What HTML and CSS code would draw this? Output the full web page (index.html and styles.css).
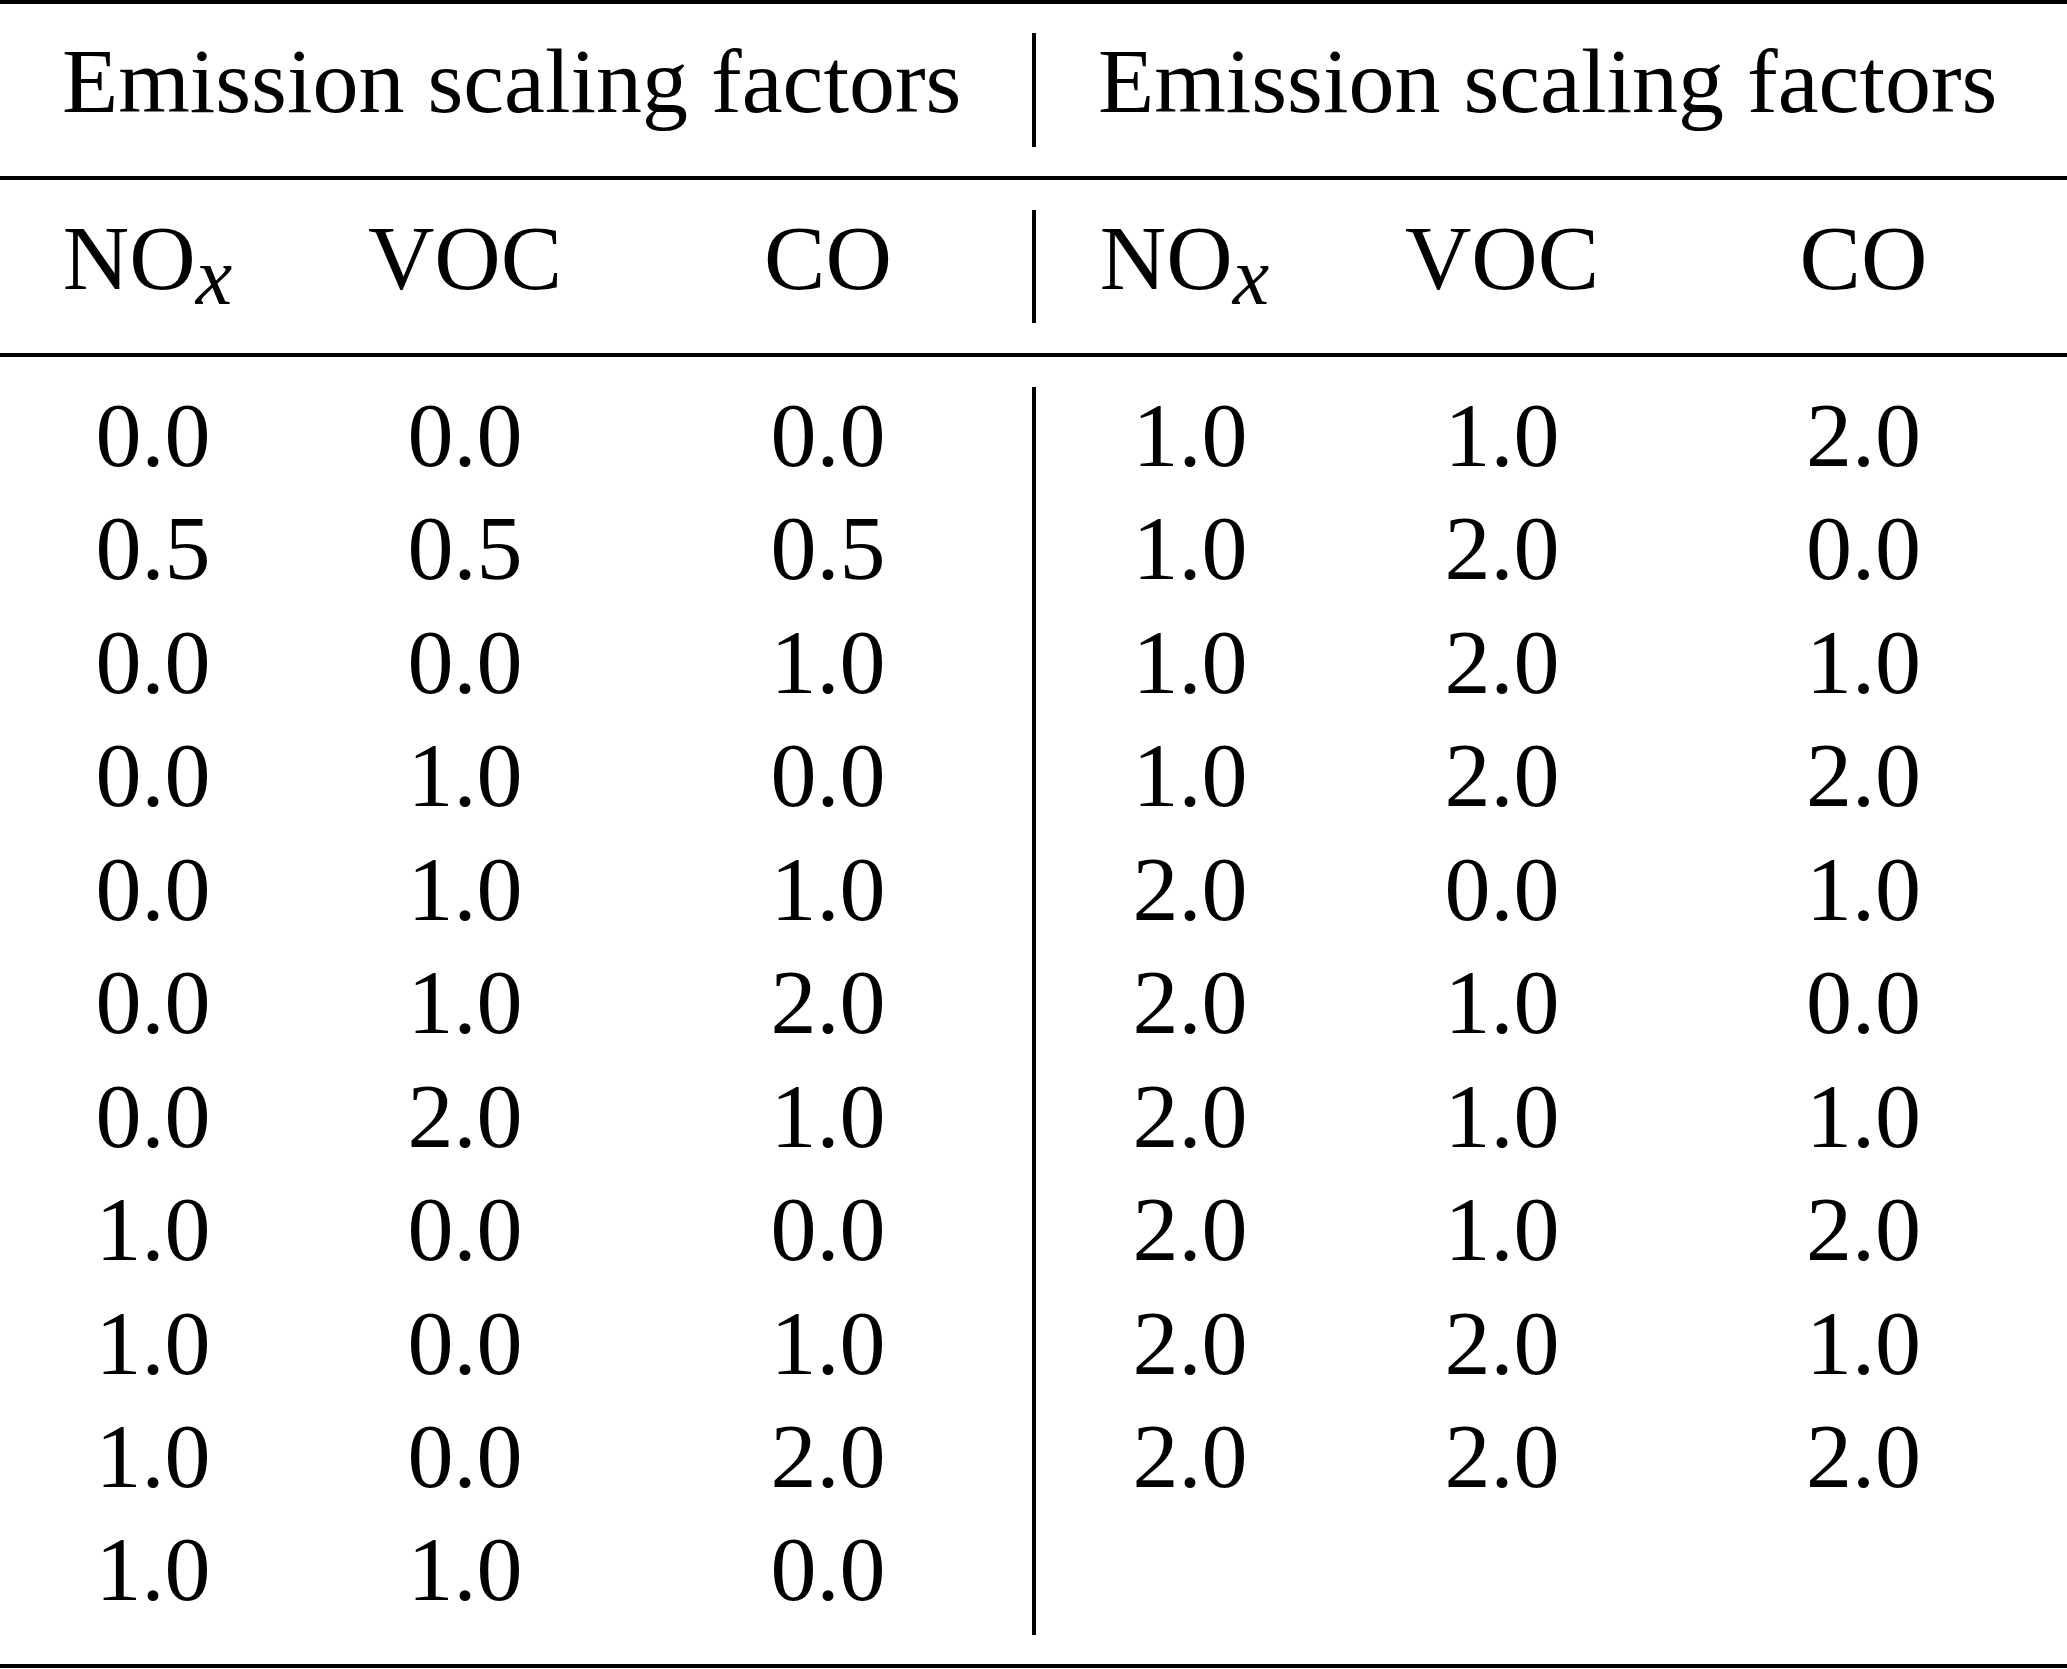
FILE: index.html
```html
<!DOCTYPE html>
<html lang="en">
<head>
<meta charset="utf-8">
<title>Emission scaling factors</title>
<link rel="stylesheet" href="styles.css">
</head>
<body>
<div class="table">
  <div class="section head1">
    <div class="half left"><div class="title">Emission scaling factors</div></div>
    <div class="divider"></div>
    <div class="half right"><div class="title">Emission scaling factors</div></div>
  </div>
  <div class="section head2">
    <div class="half left grid">
      <div class="cell nox">NO<span class="sub">x</span></div>
      <div class="cell">VOC</div>
      <div class="cell">CO</div>
    </div>
    <div class="divider"></div>
    <div class="half right grid">
      <div class="cell nox">NO<span class="sub">x</span></div>
      <div class="cell">VOC</div>
      <div class="cell">CO</div>
    </div>
  </div>
  <div class="section body">
    <div class="half left grid">
      <div class="cell">0.0</div><div class="cell">0.0</div><div class="cell">0.0</div>
      <div class="cell">0.5</div><div class="cell">0.5</div><div class="cell">0.5</div>
      <div class="cell">0.0</div><div class="cell">0.0</div><div class="cell">1.0</div>
      <div class="cell">0.0</div><div class="cell">1.0</div><div class="cell">0.0</div>
      <div class="cell">0.0</div><div class="cell">1.0</div><div class="cell">1.0</div>
      <div class="cell">0.0</div><div class="cell">1.0</div><div class="cell">2.0</div>
      <div class="cell">0.0</div><div class="cell">2.0</div><div class="cell">1.0</div>
      <div class="cell">1.0</div><div class="cell">0.0</div><div class="cell">0.0</div>
      <div class="cell">1.0</div><div class="cell">0.0</div><div class="cell">1.0</div>
      <div class="cell">1.0</div><div class="cell">0.0</div><div class="cell">2.0</div>
      <div class="cell">1.0</div><div class="cell">1.0</div><div class="cell">0.0</div>
    </div>
    <div class="divider"></div>
    <div class="half right grid">
      <div class="cell">1.0</div><div class="cell">1.0</div><div class="cell">2.0</div>
      <div class="cell">1.0</div><div class="cell">2.0</div><div class="cell">0.0</div>
      <div class="cell">1.0</div><div class="cell">2.0</div><div class="cell">1.0</div>
      <div class="cell">1.0</div><div class="cell">2.0</div><div class="cell">2.0</div>
      <div class="cell">2.0</div><div class="cell">0.0</div><div class="cell">1.0</div>
      <div class="cell">2.0</div><div class="cell">1.0</div><div class="cell">0.0</div>
      <div class="cell">2.0</div><div class="cell">1.0</div><div class="cell">1.0</div>
      <div class="cell">2.0</div><div class="cell">1.0</div><div class="cell">2.0</div>
      <div class="cell">2.0</div><div class="cell">2.0</div><div class="cell">1.0</div>
      <div class="cell">2.0</div><div class="cell">2.0</div><div class="cell">2.0</div>
    </div>
  </div>
</div>
</body>
</html>
```

FILE: styles.css
```css
html, body {
  margin: 0;
  padding: 0;
  background: #ffffff;
}

body {
  width: 2067px;
  height: 1669px;
  overflow: hidden;
  color: #000000;
  font-family: "Liberation Serif", "Times New Roman", serif;
  font-size: 92px;
  line-height: 97.9px;
}

.table {
  border-top: 4px solid #000;
  border-bottom: 4px solid #000;
}

.section {
  display: flex;
  align-items: stretch;
}

.head1 {
  padding: 29px 0;
  height: 114px;
}

.head2 {
  border-top: 4px solid #000;
  padding: 30px 0;
  height: 113px;
}

.body {
  border-top: 4px solid #000;
  padding: 30px 0 29px;
  height: 1248px;
}

.half.left {
  width: 1032px;
  flex: none;
}

.half.right {
  flex: 1;
}

.divider {
  width: 4px;
  flex: none;
  background: #000;
}

.title {
  padding-left: 62px;
  white-space: nowrap;
}

.grid {
  display: grid;
  grid-auto-rows: 113.45px;
  align-content: start;
}

.left.grid {
  grid-template-columns: 306px 318px 408px;
}

.right.grid {
  grid-template-columns: 308px 316px 407px;
}

.cell {
  text-align: center;
  white-space: nowrap;
}

.nox {
  padding-right: 11px;
}

.sub {
  font-style: italic;
  font-size: 82px;
  line-height: 0;
  vertical-align: -15px;
}
```
